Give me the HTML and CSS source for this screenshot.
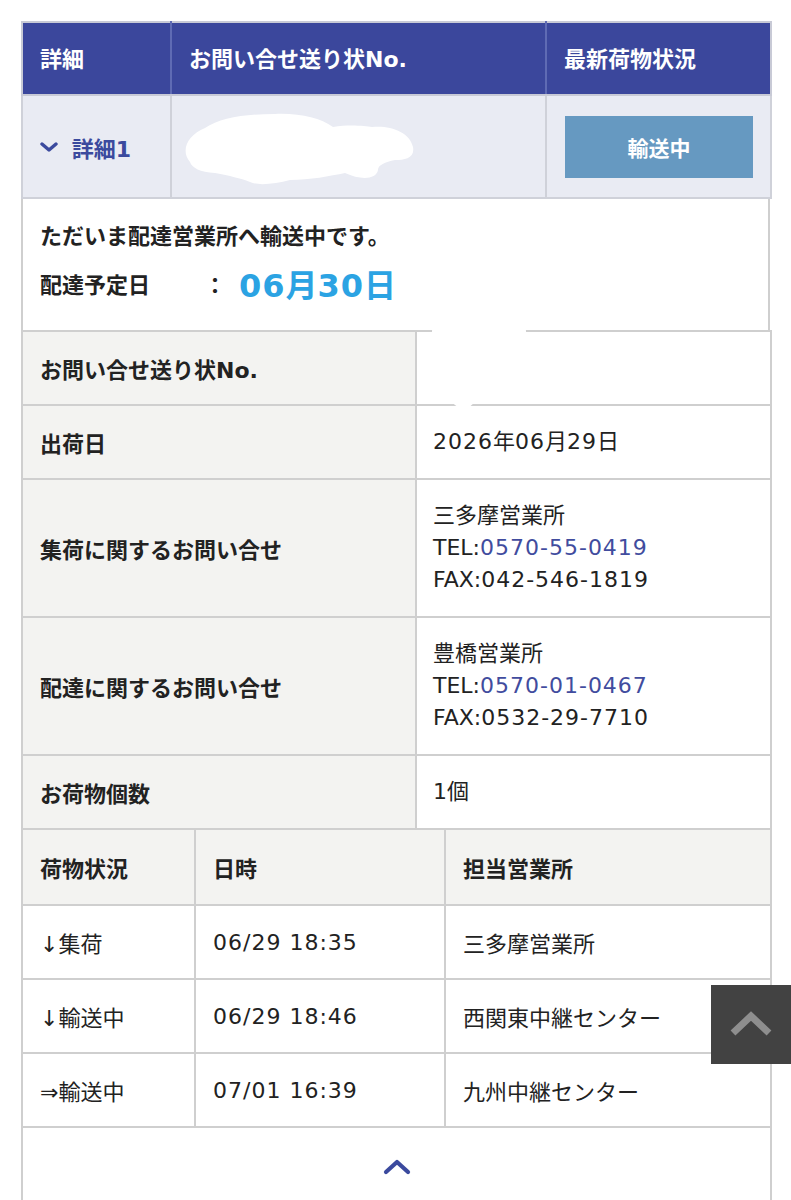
FILE: index.html
```html
<!DOCTYPE html>
<html lang="ja">
<head>
<meta charset="utf-8">
<title>お荷物問い合せ結果</title>
<link rel="stylesheet" href="styles.css">
</head>
<body>
<main class="result">
  <table class="summary">
    <colgroup><col class="c-detail"><col class="c-number"><col class="c-state"></colgroup>
    <thead>
      <tr><th>詳細</th><th>お問い合せ送り状No.</th><th>最新荷物状況</th></tr>
    </thead>
    <tbody>
      <tr class="summary-row">
        <td class="detail-toggle">
          <svg class="toggle-icon" width="18" height="12" viewBox="0 0 18 12"><polyline points="2,3 9,9 16,3" fill="none" stroke="#3b4a9e" stroke-width="3.4" stroke-linecap="round" stroke-linejoin="round"/></svg>
          <span>詳細1</span>
        </td>
        <td class="number-cell">
          <svg class="mask" width="260" height="80" viewBox="172 107 260 80"><path fill="#fff" d="M190,162 C180,150 188,135 205,128 C220,118 245,114 275,114 C300,113 320,118 333,127 C350,124 365,126 372,127 C390,125 410,132 413,147 C415,158 405,160 395,160 C385,162 378,165 378,170 C376,180 360,180 345,173 C330,176 310,180 290,180 C275,184 258,186 250,182 C240,178 230,176 215,173 C200,172 192,168 190,162 Z"/></svg>
        </td>
        <td class="state-cell"><span class="state-badge">輸送中</span></td>
      </tr>
    </tbody>
  </table>

  <section class="notice">
    <p class="notice-msg">ただいま配達営業所へ輸送中です。</p>
    <p class="notice-date"><span class="notice-label">配達予定日</span><span class="notice-colon">：</span><span class="notice-value"><span class="num">06</span>月<span class="num">30</span>日</span></p>
  </section>

  <table class="info">
    <colgroup><col class="c-label"><col class="c-value"></colgroup>
    <tbody>
      <tr class="row-s"><th>お問い合せ送り状No.</th><td class="masked">
        <svg class="mask-edge" width="100" height="86" viewBox="0 0 100 86"><rect x="2" y="0" width="94" height="10" rx="4" fill="#fff"/><polygon points="20,74 46,74 34,85" fill="#fff"/></svg>
      </td></tr>
      <tr class="row-s"><th>出荷日</th><td><span class="num">2026</span>年<span class="num">06</span>月<span class="num">29</span>日</td></tr>
      <tr class="row-l"><th>集荷に関するお問い合せ</th><td>三多摩営業所<br>TEL:<a class="num" href="#">0570-55-0419</a><br>FAX:<span class="num">042-546-1819</span></td></tr>
      <tr class="row-l"><th>配達に関するお問い合せ</th><td>豊橋営業所<br>TEL:<a class="num" href="#">0570-01-0467</a><br>FAX:<span class="num">0532-29-7710</span></td></tr>
      <tr class="row-s"><th>お荷物個数</th><td>1個</td></tr>
    </tbody>
  </table>

  <table class="history">
    <colgroup><col class="c-h1"><col class="c-h2"><col class="c-h3"></colgroup>
    <thead>
      <tr><th>荷物状況</th><th>日時</th><th>担当営業所</th></tr>
    </thead>
    <tbody>
      <tr><td>↓集荷</td><td class="num">06/29 18:35</td><td>三多摩営業所</td></tr>
      <tr><td>↓輸送中</td><td class="num">06/29 18:46</td><td>西関東中継センター</td></tr>
      <tr><td>⇒輸送中</td><td class="num">07/01 16:39</td><td>九州中継センター</td></tr>
      <tr class="close-row"><td colspan="3">
        <svg width="28" height="16" viewBox="0 0 28 16"><polyline points="3,13 14,3 25,13" fill="none" stroke="#3b4a9e" stroke-width="4.2" stroke-linecap="round" stroke-linejoin="round"/></svg>
      </td></tr>
    </tbody>
  </table>
</main>

<a class="page-top" href="#" aria-label="ページトップへ">
  <svg width="44" height="26" viewBox="0 0 44 26"><polyline points="4,22 22,5 40,22" fill="none" stroke="#8e8e8e" stroke-width="7"/></svg>
</a>
</body>
</html>
```

FILE: styles.css
```css
* { box-sizing: border-box; }

html, body {
  margin: 0;
  background: #fff;
}

body {
  font-family: "DejaVu Sans", "Noto Sans CJK JP", sans-serif;
  color: #222;
  font-size: 22px;
}

/* figures run slightly looser than the text face */
.num { letter-spacing: 1px; }

.result {
  padding: 21px 21px 0;
  width: 791px;
}

table {
  width: 749px;
  border-collapse: collapse;
  table-layout: fixed;
}

th, td {
  border: 2px solid #cfcfcf;
  padding: 0 0 0 17px;
  text-align: left;
  vertical-align: middle;
}

/* summary: header + first detail row */
.c-detail { width: 149px; }
.c-number { width: 375px; }
.c-state { width: 225px; }

.summary th {
  background: #3b479c;
  color: #fff;
  font-weight: 700;
  height: 73px;
  border-color: #c8cad6;
  border-left-color: #5f6bb4;
  border-right-color: #5f6bb4;
  padding-bottom: 3px;
}
.summary th:first-child { border-left-color: #c8cad6; }
.summary th:last-child { border-right-color: #c8cad6; }

.summary-row td {
  background: #e9ebf3;
  height: 103px;
  border-color: #cfd1d9;
}

.detail-toggle {
  color: #3b4a9e;
  font-weight: 700;
}
.detail-toggle span { vertical-align: middle; }
.toggle-icon {
  vertical-align: middle;
  margin-right: 6px;
}

.number-cell { padding: 0; }
.mask { display: block; }

.state-cell {
  padding: 0 17px 0 18px;
}
.state-badge {
  display: flex;
  align-items: center;
  justify-content: center;
  height: 62px;
  background: #6699c1;
  color: #fff;
  font-weight: 700;
  font-size: 21px;
}

/* delivery notice */
.notice {
  width: 749px;
  border: 2px solid #cfcfcf;
  border-top: 0;
  border-bottom: 0;
  padding: 18px 17px 22px;
  height: 131px;
}
.notice p { margin: 0; }
.notice-msg {
  font-weight: 700;
  line-height: 40px;
}
.notice-date {
  display: flex;
  align-items: center;
  font-weight: 700;
  height: 52px;
}
.notice-label { width: 164px; }
.notice-colon { width: 35px; }
.notice-value {
  color: #2ba3e3;
  font-size: 32px;
}

/* detail info */
.c-label { width: 394px; }
.c-value { width: 355px; }

.info th {
  background: #f3f3f1;
  font-weight: 700;
}
.info td {
  background: #fff;
  line-height: 32px;
  padding-left: 16px;
}
.info .row-s th, .info .row-s td { height: 74px; }
.info .row-l th, .info .row-l td { height: 138px; }
.info a {
  color: #414c9e;
  text-decoration: none;
}
.masked { position: relative; }
.mask-edge {
  position: absolute;
  left: 13px;
  top: -5px;
}

/* history */
.c-h1 { width: 173px; }
.c-h2 { width: 250px; }
.c-h3 { width: 326px; }

.history tr:first-child th { border-top: 0; }
.history th {
  background: #f3f3f1;
  font-weight: 700;
  height: 75px;
}
.history td {
  height: 74px;
}

.close-row td {
  height: 90px;
  text-align: center;
  padding: 0 0 14px;
  border-bottom: 0;
}
.close-row svg { vertical-align: middle; }

/* floating back-to-top */
.page-top {
  position: fixed;
  right: 0;
  top: 985px;
  width: 80px;
  height: 79px;
  background: #424242;
  display: flex;
  align-items: center;
  justify-content: center;
}
.page-top svg { margin-top: -2px; }
```
